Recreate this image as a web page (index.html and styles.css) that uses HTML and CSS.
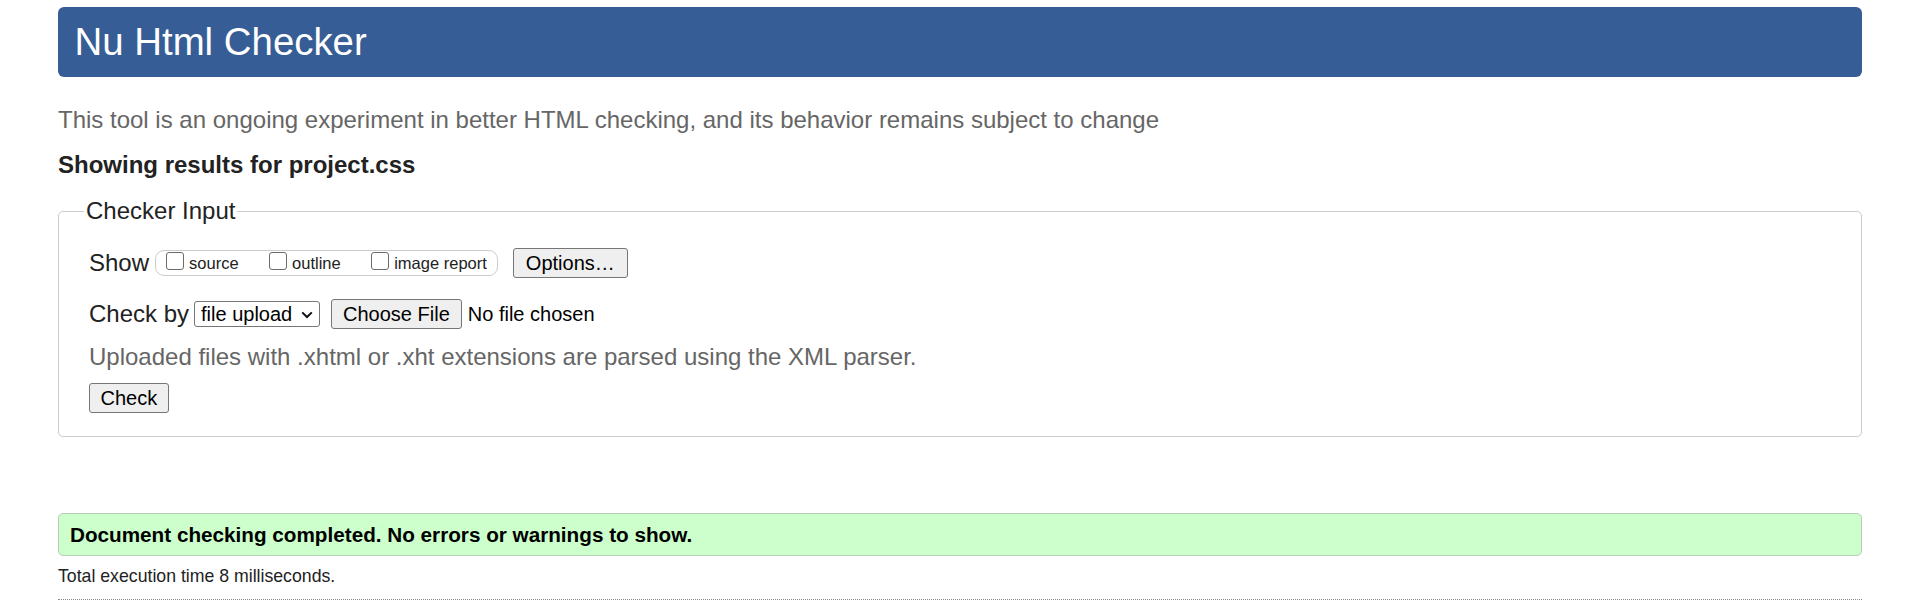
FILE: index.html
```html
<!DOCTYPE html>
<html lang="en">
<head>
<meta charset="utf-8">
<title>Showing results for project.css - Nu Html Checker</title>
<link rel="stylesheet" href="styles.css">
</head>
<body>
<div class="page">
  <h1 class="title">Nu Html Checker</h1>
  <p class="intro">This tool is an ongoing experiment in better HTML checking, and its behavior remains subject to change</p>
  <p class="results-for">Showing results for project.css</p>
  <form class="input-form">
    <fieldset class="checker">
      <legend class="checker-legend">Checker Input</legend>
      <div class="row">
        <span class="row-label">Show</span>
        <div class="show-group">
          <label class="opt"><input type="checkbox" class="cb">source</label>
          <label class="opt"><input type="checkbox" class="cb">outline</label>
          <label class="opt"><input type="checkbox" class="cb">image report</label>
        </div>
        <button type="button" class="btn btn-options">Options…</button>
      </div>
      <div class="row row-checkby">
        <span class="row-label row-label-by">Check by</span>
        <span class="sel-wrap">
          <select class="sel"><option>file upload</option></select>
          <svg class="sel-arrow" width="12" height="8" viewBox="0 0 12 8" aria-hidden="true"><path d="M1.2 1.4 L6 6 L10.8 1.4" fill="none" stroke="#111" stroke-width="2"/></svg>
        </span>
        <button type="button" class="btn btn-file">Choose File</button>
        <span class="nofile">No file chosen</span>
      </div>
      <p class="hint">Uploaded files with .xhtml or .xht extensions are parsed using the XML parser.</p>
      <div class="row row-submit">
        <button type="submit" class="btn btn-check">Check</button>
      </div>
    </fieldset>
  </form>
  <div class="success">Document checking completed. No errors or warnings to show.</div>
  <p class="stats">Total execution time 8 milliseconds.</p>
  <hr class="rule">
</div>
</body>
</html>
```

FILE: styles.css
```css
* {
  box-sizing: border-box;
}

body {
  margin: 0;
  background: #ffffff;
  color: #222222;
  font-family: "Liberation Sans", Arial, sans-serif;
}

.page {
  padding: 7px 57px 0 58px;
}

.title {
  margin: 0;
  height: 70px;
  padding-left: 16.5px;
  background: #365d95;
  color: #ffffff;
  border-radius: 6px;
  font-size: 38.4px;
  font-weight: normal;
  line-height: 70px;
}

.intro {
  margin: 29px 0 0;
  color: #666666;
  font-size: 24px;
  line-height: 28px;
}

.results-for {
  margin: 17px 0 0;
  color: #222222;
  font-size: 24px;
  font-weight: bold;
  line-height: 28px;
}

.input-form {
  margin: 19px 0 0;
}

.checker {
  margin: 0;
  min-width: 0;
  padding: 24px 30px 23px 30px;
  border: 1px solid #cccccc;
  border-radius: 5px;
}

.checker-legend {
  margin-left: -5px;
  padding: 0 2px;
  color: #222222;
  font-size: 24px;
  line-height: 26px;
}

.row {
  display: flex;
  align-items: center;
  height: 30px;
}

.row-checkby {
  margin-top: 21px;
}

.row-submit {
  margin-top: 12px;
}

.row-label {
  margin-right: 6px;
  color: #222222;
  font-size: 24px;
  line-height: 28px;
}

.row-label-by {
  margin-right: 5px;
}

.show-group {
  display: flex;
  align-items: center;
  height: 26px;
  padding: 0 10px;
  border: 1px solid #cccccc;
  border-radius: 9px;
}

.opt {
  display: flex;
  align-items: center;
  color: #222222;
  font-size: 16.5px;
  line-height: 19px;
}

.opt + .opt {
  margin-left: 30.5px;
}

.cb {
  appearance: none;
  -webkit-appearance: none;
  align-self: flex-start;
  width: 18px;
  height: 18px;
  margin: -1.5px 5px 0 0;
  background: #ffffff;
  border: 1.5px solid #6b6b6b;
  border-radius: 3px;
}

.btn {
  height: 30px;
  padding: 0 11px;
  background: #efefef;
  color: #000000;
  border: 1px solid #767676;
  border-radius: 3px;
  font-family: "Liberation Sans", Arial, sans-serif;
  font-size: 20px;
  line-height: 28px;
}

.btn-options {
  margin-left: 15px;
  padding: 0 12px;
}

.btn-check {
  padding: 0 10.5px;
}

.sel-wrap {
  position: relative;
  display: flex;
  align-items: center;
}

.sel {
  appearance: none;
  -webkit-appearance: none;
  width: 126px;
  height: 26px;
  padding: 0 0 0 6px;
  color: #000000;
  background: #ffffff;
  border: 1px solid #767676;
  border-radius: 3px;
  font-family: "Liberation Sans", Arial, sans-serif;
  font-size: 20px;
}

.sel-arrow {
  position: absolute;
  right: 7px;
  top: 10px;
  pointer-events: none;
}

.btn-file {
  margin-left: 11px;
}

.nofile {
  margin-left: 6px;
  color: #000000;
  font-size: 20px;
  line-height: 28px;
}

.hint {
  margin: 14px 0 0;
  color: #666666;
  font-size: 24px;
  line-height: 28px;
}

.success {
  height: 43px;
  margin-top: 76px;
  padding: 0 11px;
  background: #ccffcc;
  border: 1px solid #b5cdb5;
  border-radius: 5px;
  color: #000000;
  font-size: 20.7px;
  font-weight: bold;
  line-height: 41px;
}

.stats {
  margin: 10px 0 0;
  color: #222222;
  font-size: 17.7px;
  line-height: 21px;
}

.rule {
  height: 0;
  margin: 12px 0 0;
  border: 0;
  border-top: 1px dotted #8a8a8a;
}
```
